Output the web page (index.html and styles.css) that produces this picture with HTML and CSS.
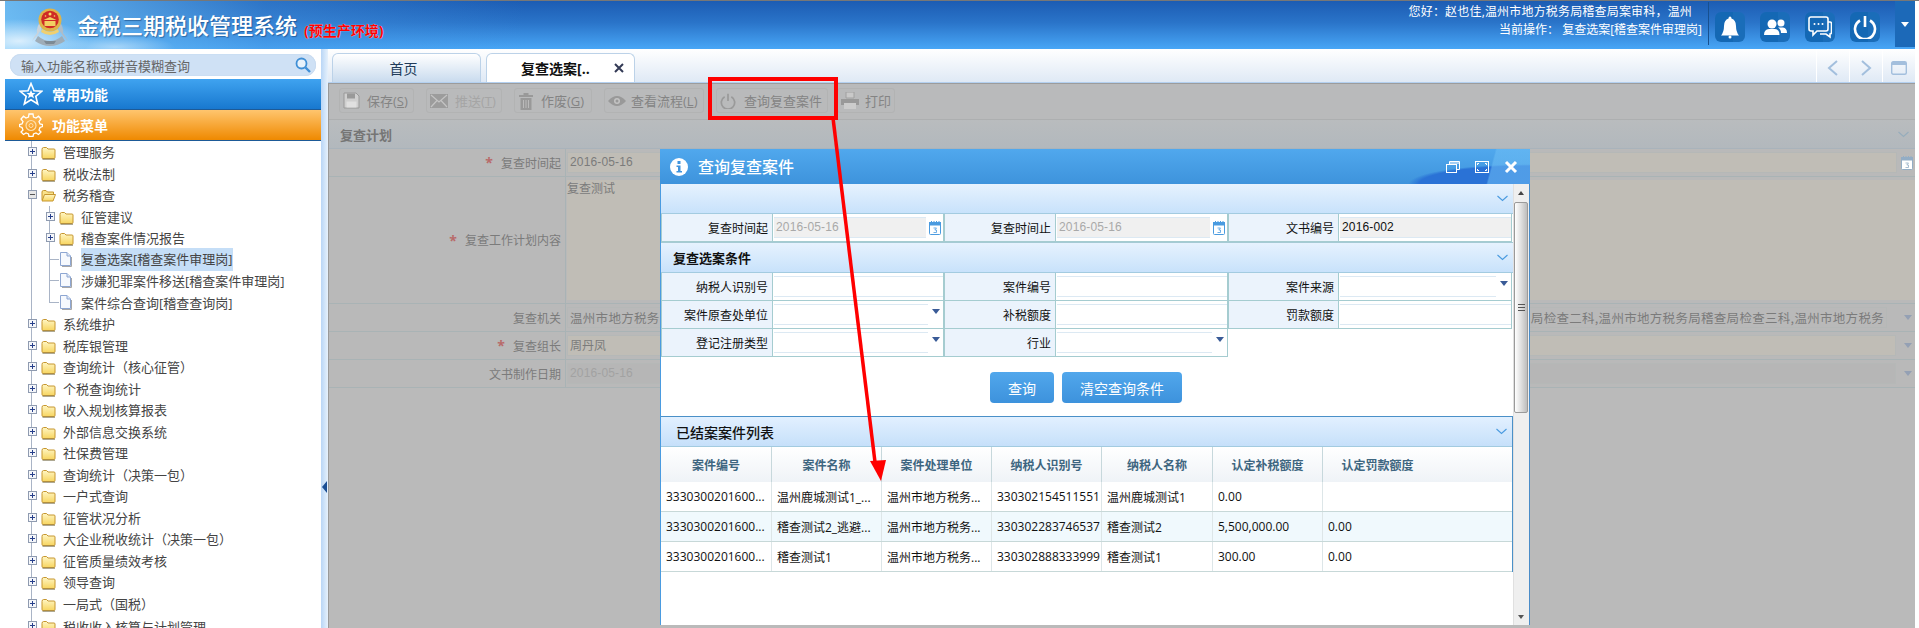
FILE: index.html
```html
<!DOCTYPE html>
<html lang="zh">
<head>
<meta charset="utf-8">
<title>金税三期税收管理系统</title>
<link rel="stylesheet" href="styles.css">
</head>
<body>
<svg class="defs" width="0" height="0" aria-hidden="true">
  <defs>
    <linearGradient id="fy" x1="0" y1="0" x2="0" y2="1"><stop offset="0" stop-color="#fff6c4"/><stop offset="1" stop-color="#f7d560"/></linearGradient>
    <symbol id="folder" viewBox="0 0 15 15"><path d="M1 4.500V12.500Q1 13.500 2 13.500H13Q14 13.500 14 12.500V5Q14 4 13 4H7L5.500 2.500H2.500Q1 2.500 1 4.500Z" fill="url(#fy)" stroke="#c6962f"/><path d="M1.500 14.200H14" stroke="#8a8262" stroke-width="1"/></symbol>
    <symbol id="folder-open" viewBox="0 0 15 15"><path d="M1 12V4Q1 2.500 2.500 2.500H5L6.500 4H12.500V6" fill="#f9e28a" stroke="#c6962f"/><path d="M1 13H12L14.500 6.500H3.500Z" fill="url(#fy)" stroke="#c6962f"/></symbol>
    <symbol id="file" viewBox="0 0 13 15"><path d="M1.500 .5H8L11.500 4V13.500H1.500Z" fill="#f6f9fe" stroke="#8da6d2"/><path d="M8 .5V4H11.500" fill="#dde7f6" stroke="#8da6d2"/><path d="M12.500 5V14.500H3" fill="none" stroke="#a7a7a7"/></symbol>
    <symbol id="plus" viewBox="0 0 9 9"><rect x=".5" y=".5" width="8" height="8" fill="#f4f6fa" stroke="#8f9bb0"/><path d="M2 4.500H7M4.500 2V7" stroke="#27408b"/></symbol>
    <symbol id="minus" viewBox="0 0 9 9"><rect x=".5" y=".5" width="8" height="8" fill="#e6e6e6" stroke="#8f9bb0"/><path d="M2 4.500H7" stroke="#555"/></symbol>
    <symbol id="cal" viewBox="0 0 12 14"><rect x=".5" y="1.500" width="11" height="12" rx="1" fill="#fff" stroke="currentColor"/><rect x="0" y="1" width="12" height="3.500" fill="currentColor"/><path d="M2.500 0V2M5 0V2M7.500 0V2M10 0V2" stroke="currentColor"/><path d="M4.500 7H7.500L5.800 9H7.500V11.500H4.500" fill="none" stroke="currentColor" stroke-width=".8"/></symbol>
    <symbol id="chev" viewBox="0 0 11 7"><path d="M.5 1L5.500 5.500L10.500 1" fill="none" stroke="currentColor" stroke-width="1.100"/></symbol>
    <symbol id="power" viewBox="0 0 24 24"><path d="M7 5.500A10 10 0 1 0 17 5.500" fill="none" stroke="currentColor" stroke-width="2.600"/><path d="M12 1V12" stroke="currentColor" stroke-width="2.600"/></symbol>
  </defs>
</svg>

<div class="app">
  <header class="topbar">
    <div class="brand">
      <svg class="emblem" viewBox="0 0 36 38">
        <path d="M0 33Q5 29 9 22L10 12Q4 18 5 25Q2 29 0 33Z" fill="#c9d3db"/>
        <path d="M36 33Q31 29 27 22L26 12Q32 18 31 25Q34 29 36 33Z" fill="#aebcc8"/>
        <path d="M3 33Q10 38 18 38Q26 38 33 33L30 28Q24 33 18 33Q12 33 6 28Z" fill="#9fadb8"/>
        <path d="M12 33H24L22 36H14Z" fill="#7d8a94"/>
        <circle cx="18" cy="12" r="11.500" fill="#dfb44a"/>
        <circle cx="18" cy="11.500" r="8.800" fill="#cf2a26"/>
        <path d="M10 21Q18 27 26 21L27 24Q18 30 9 24Z" fill="#f0d070"/>
        <path d="M12.500 13H23.500V18H12.500ZM11.500 12L18 9L24.500 12Z" fill="#f2cf63"/>
        <circle cx="18" cy="6" r="1.500" fill="#f8dd66"/>
        <circle cx="13.500" cy="8" r=".8" fill="#f8dd66"/><circle cx="22.500" cy="8" r=".8" fill="#f8dd66"/>
      </svg>
      <span class="brand-title">金税三期税收管理系统</span>
      <span class="brand-env">(预生产环境)</span>
    </div>
    <div class="user">
      <p>您好：赵也佳,温州市地方税务局稽查局案审科，温州</p>
      <p>当前操作： 复查选案[稽查案件审理岗]</p>
    </div>
    <div class="top-actions">
      <span class="top-btn"><svg viewBox="0 0 24 24" width="24" height="24"><path d="M12 1.500Q13.500 1.500 13.500 3.500Q18 5 18 11Q18 17 21 20.500H3Q6 17 6 11Q6 5 10.500 3.500Q10.500 1.500 12 1.500Z" fill="#fff"/><circle cx="12" cy="22" r="1.500" fill="#fff"/></svg></span>
      <span class="top-btn"><svg viewBox="0 0 24 24" width="24" height="24"><circle cx="9" cy="9" r="4.500" fill="#fff"/><circle cx="18" cy="8" r="3.500" fill="#fff"/><path d="M1 20Q1 14.500 6 14H12Q16.500 14.500 16.500 20Z" fill="#fff"/><path d="M15 12.500H20Q24 13 24 18H18Q18 14 15 12.500Z" fill="#fff"/></svg></span>
      <span class="top-btn"><svg viewBox="0 0 24 24" width="24" height="24"><path d="M3 2H18Q20 2 20 4V14Q20 16 18 16H9L5 20V16H3Q1 16 1 14V4Q1 2 3 2Z" fill="none" stroke="#fff" stroke-width="1.600"/><path d="M20 7H22Q23.500 7 23.500 9V17Q23.500 19 22 19V22L18 19H12" fill="none" stroke="#fff" stroke-width="1.600"/><circle cx="6.500" cy="9" r="1" fill="#fff"/><circle cx="10.500" cy="9" r="1" fill="#fff"/><circle cx="14.500" cy="9" r="1" fill="#fff"/></svg></span>
      <span class="top-btn"><svg class="ic-white" width="24" height="24"><use href="#power"/></svg></span>
    </div>
    <div class="top-more"><i class="caret-white"></i></div>
  </header>

  <div class="workspace">
    <aside class="sidebar">
      <div class="search">
        <div class="search-box">
          <span>输入功能名称或拼音模糊查询</span>
          <svg viewBox="0 0 16 16" width="16" height="16"><circle cx="6.500" cy="6.500" r="5" fill="#e8f2fb" stroke="#3f8fd6" stroke-width="1.800"/><path d="M10.500 10.500L15 15" stroke="#3f8fd6" stroke-width="2.400"/></svg>
        </div>
      </div>
      <div class="nav nav-blue">
        <svg viewBox="0 0 24 24" width="24" height="24"><path d="M12 1.500L15 8.800L22.800 9.300L16.800 14.300L18.700 22L12 17.800L5.300 22L7.200 14.300L1.200 9.300L9 8.800Z" fill="none" stroke="#fff" stroke-width="1.600"/><path d="M12 8L13.300 11H16.500L14 13L15 16.300L12 14.500L9 16.300L10 13L7.500 11H10.700Z" fill="#fff"/></svg>
        <span>常用功能</span>
      </div>
      <div class="nav nav-orange">
        <svg viewBox="0 0 24 24" width="24" height="24"><path d="M10 1H14L14.500 4L17 5L19.500 3.200L22 6L20 8.500L21 11L23.500 11.500V13.500L21 14.500L20 17L22 19L19.500 21.500L17 20L14.500 21L14 23.500H10L9.500 21L7 20L4.500 21.500L2 19L4 17L3 14.500L.5 13.500V11.500L3 11L4 8.500L2 6L4.500 3.200L7 5L9.500 4Z" fill="none" stroke="#fff" stroke-width="1.300"/><circle cx="12" cy="12.500" r="5" fill="none" stroke="#ffe0ad" stroke-width="1.200"/><circle cx="12" cy="12.500" r="2" fill="none" stroke="#ffe0ad"/></svg>
        <span>功能菜单</span>
      </div>
      <ul class="tree">
        <li class="node"><svg class="tg"><use href="#plus"/></svg><svg class="fd"><use href="#folder"/></svg><span>管理服务</span></li>
        <li class="node"><svg class="tg"><use href="#plus"/></svg><svg class="fd"><use href="#folder"/></svg><span>税收法制</span></li>
        <li class="node"><svg class="tg"><use href="#minus"/></svg><svg class="fd"><use href="#folder-open"/></svg><span>税务稽查</span></li>
        <li class="node sub"><svg class="tg"><use href="#plus"/></svg><svg class="fd"><use href="#folder"/></svg><span>征管建议</span></li>
        <li class="node sub"><svg class="tg"><use href="#plus"/></svg><svg class="fd"><use href="#folder"/></svg><span>稽查案件情况报告</span></li>
        <li class="node sub leaf"><i class="stub"></i><svg class="fl"><use href="#file"/></svg><span class="sel">复查选案[稽查案件审理岗]</span></li>
        <li class="node sub leaf"><i class="stub"></i><svg class="fl"><use href="#file"/></svg><span>涉嫌犯罪案件移送[稽查案件审理岗]</span></li>
        <li class="node sub leaf last"><i class="stub"></i><svg class="fl"><use href="#file"/></svg><span>案件综合查询[稽查查询岗]</span></li>
        <li class="node"><svg class="tg"><use href="#plus"/></svg><svg class="fd"><use href="#folder"/></svg><span>系统维护</span></li>
        <li class="node"><svg class="tg"><use href="#plus"/></svg><svg class="fd"><use href="#folder"/></svg><span>税库银管理</span></li>
        <li class="node"><svg class="tg"><use href="#plus"/></svg><svg class="fd"><use href="#folder"/></svg><span>查询统计（核心征管）</span></li>
        <li class="node"><svg class="tg"><use href="#plus"/></svg><svg class="fd"><use href="#folder"/></svg><span>个税查询统计</span></li>
        <li class="node"><svg class="tg"><use href="#plus"/></svg><svg class="fd"><use href="#folder"/></svg><span>收入规划核算报表</span></li>
        <li class="node"><svg class="tg"><use href="#plus"/></svg><svg class="fd"><use href="#folder"/></svg><span>外部信息交换系统</span></li>
        <li class="node"><svg class="tg"><use href="#plus"/></svg><svg class="fd"><use href="#folder"/></svg><span>社保费管理</span></li>
        <li class="node"><svg class="tg"><use href="#plus"/></svg><svg class="fd"><use href="#folder"/></svg><span>查询统计（决策一包）</span></li>
        <li class="node"><svg class="tg"><use href="#plus"/></svg><svg class="fd"><use href="#folder"/></svg><span>一户式查询</span></li>
        <li class="node"><svg class="tg"><use href="#plus"/></svg><svg class="fd"><use href="#folder"/></svg><span>征管状况分析</span></li>
        <li class="node"><svg class="tg"><use href="#plus"/></svg><svg class="fd"><use href="#folder"/></svg><span>大企业税收统计（决策一包）</span></li>
        <li class="node"><svg class="tg"><use href="#plus"/></svg><svg class="fd"><use href="#folder"/></svg><span>征管质量绩效考核</span></li>
        <li class="node"><svg class="tg"><use href="#plus"/></svg><svg class="fd"><use href="#folder"/></svg><span>领导查询</span></li>
        <li class="node"><svg class="tg"><use href="#plus"/></svg><svg class="fd"><use href="#folder"/></svg><span>一局式（国税）</span></li>
        <li class="node"><svg class="tg"><use href="#plus"/></svg><svg class="fd"><use href="#folder"/></svg><span>税收收入核算与计划管理</span></li>
      </ul>
    </aside>
    <div class="splitter"><i class="split-arrow"></i></div>

    <main class="main">
      <div class="tabbar">
        <div class="tab tab-home">首页</div>
        <div class="tab tab-active"><span>复查选案[..</span><svg class="tab-x" width="10" height="10" viewBox="0 0 10 10"><path d="M1 1L9 9M9 1L1 9" stroke="#333a55" stroke-width="2"/></svg></div>
        <div class="tab-tools">
          <span class="tool"><svg width="12" height="18" viewBox="0 0 12 18"><path d="M10 2L2 9L10 16" fill="none" stroke="#a3bfdd" stroke-width="2"/></svg></span>
          <span class="tool"><svg width="12" height="18" viewBox="0 0 12 18"><path d="M2 2L10 9L2 16" fill="none" stroke="#a3bfdd" stroke-width="2"/></svg></span>
          <span class="tool"><svg width="16" height="14" viewBox="0 0 16 14"><rect x=".7" y=".7" width="14.600" height="12.600" rx="1.500" fill="none" stroke="#a3bfdd" stroke-width="1.400"/><rect x="1" y="1" width="14" height="3" fill="#a3bfdd"/></svg></span>
        </div>
      </div>

      <div class="page">
        <div class="toolbar">
          <span class="tb tb-save"><svg width="17" height="17" viewBox="0 0 17 17"><path d="M1 1H13L16 4V16H1Z" fill="#cfcfcf" stroke="#999"/><rect x="4" y="1.500" width="8" height="5" fill="#999"/><rect x="3.500" y="9.500" width="10" height="6" fill="#e0e0e0"/></svg><span>保存(<u>S</u>)</span></span>
          <span class="tb tb-off"><svg width="18" height="14" viewBox="0 0 18 14"><rect x="0" y="0" width="18" height="14" fill="#9c9c9c"/><path d="M1 1L9 8L17 1M1 13L7 6.500M17 13L11 6.500" fill="none" stroke="#c4c4c4" stroke-width="1.200"/></svg><span>推送(<u>T</u>)</span></span>
          <span class="tb tb-del"><svg width="14" height="18" viewBox="0 0 14 18"><path d="M0 3H14V5H0ZM4.500 1H9.500V3H4.500ZM1.500 6H12.500V18H1.500Z" fill="#999"/><path d="M4.500 8V16M7 8V16M9.500 8V16" stroke="#bbb"/></svg><span>作废(<u>G</u>)</span></span>
          <span class="tb tb-flow"><svg width="18" height="12" viewBox="0 0 18 12"><path d="M0 6Q9 -4 18 6Q9 16 0 6Z" fill="#999"/><circle cx="9" cy="6" r="3" fill="#c4c4c4"/><circle cx="9" cy="6" r="1.500" fill="#999"/></svg><span>查看流程(<u>L</u>)</span></span>
          <span class="tb tb-query"><svg class="ic-grey" width="16" height="16"><use href="#power"/></svg><span>查询复查案件</span></span>
          <span class="tb tb-print"><svg width="18" height="17" viewBox="0 0 18 17"><path d="M5 0H13V6H5Z" fill="#c9c9c9" stroke="#a0a0a0"/><path d="M0 7H18V13H0Z" fill="#999"/><path d="M3 11H15V17H3Z" fill="#ccc"/></svg><span>打印</span></span>
        </div>

        <div class="bg-head"><span>复查计划</span><svg class="bg-chev"><use href="#chev"/></svg></div>
        <div class="bg-form">
          <div class="bg-row">
            <label class="bg-label"><em>*</em>复查时间起</label>
            <div class="bg-value"><span class="bg-input beige arial">2016-05-16</span><svg class="bg-cal"><use href="#cal"/></svg></div>
          </div>
          <div class="bg-row bg-tall">
            <label class="bg-label"><em>*</em>复查工作计划内容</label>
            <div class="bg-value"><span class="bg-area">复查测试</span></div>
          </div>
          <div class="bg-row">
            <label class="bg-label">复查机关</label>
            <div class="bg-value"><span class="bg-input plain"><span>温州市地方税务</span><span>局检查二科,温州市地方税务局稽查局检查三科,温州市地方税务</span></span><i class="bg-caret"></i></div>
          </div>
          <div class="bg-row">
            <label class="bg-label"><em>*</em>复查组长</label>
            <div class="bg-value"><span class="bg-input beige">周丹凤</span><i class="bg-caret"></i></div>
          </div>
          <div class="bg-row">
            <label class="bg-label">文书制作日期</label>
            <div class="bg-value"><span class="bg-input dim arial">2016-05-16</span><i class="bg-caret"></i></div>
          </div>
        </div>
      </div>

      <section class="modal">
        <div class="modal-title">
          <svg width="18" height="18" viewBox="0 0 18 18"><circle cx="9" cy="9" r="9" fill="#fff"/><rect x="7.500" y="3" width="3" height="3" fill="#3f94de"/><path d="M6.500 7.500H10.500V13H12V14.500H6.500V13H8V9H6.500Z" fill="#3f94de"/></svg>
          <h1>查询复查案件</h1>
          <div class="modal-tools">
            <svg width="14" height="12" viewBox="0 0 14 12"><rect x=".5" y="3.500" width="10" height="8" fill="none" stroke="#fff"/><path d="M3.500 3.500V.5H13.500V8.500H10.500M3.500 2H13.500" fill="none" stroke="#fff"/></svg>
            <svg width="14" height="12" viewBox="0 0 14 12"><rect x=".5" y=".5" width="13" height="11" fill="none" stroke="#fff"/><path d="M2.500 4V2.500H4M10 2.500H11.500V4M2.500 8V9.500H4M10 9.500H11.500V8" fill="none" stroke="#fff"/></svg>
            <svg width="14" height="14" viewBox="0 0 14 14"><path d="M2 2L12 12M12 2L2 12" stroke="#fff" stroke-width="3"/></svg>
          </div>
        </div>
        <div class="modal-body">
          <div class="modal-content">
            <div class="m-head"><span></span><svg class="m-chev"><use href="#chev"/></svg></div>
            <div class="m-form">
              <label>复查时间起</label>
              <div class="cell"><span class="field ro grey arial">2016-05-16</span><svg class="m-cal"><use href="#cal"/></svg></div>
              <label>复查时间止</label>
              <div class="cell"><span class="field ro grey arial">2016-05-16</span><svg class="m-cal"><use href="#cal"/></svg></div>
              <label>文书编号</label>
              <div class="cell"><span class="field ro arial">2016-002</span></div>
            </div>
            <div class="m-head m-head-2"><span>复查选案条件</span><svg class="m-chev"><use href="#chev"/></svg></div>
            <div class="m-form">
              <label>纳税人识别号</label>
              <div class="cell"><span class="field"></span></div>
              <label>案件编号</label>
              <div class="cell"><span class="field"></span></div>
              <label>案件来源</label>
              <div class="cell"><span class="field"></span><i class="m-caret"></i></div>
              <label>案件原查处单位</label>
              <div class="cell"><span class="field"></span><i class="m-caret"></i></div>
              <label>补税额度</label>
              <div class="cell"><span class="field"></span></div>
              <label>罚款额度</label>
              <div class="cell"><span class="field"></span></div>
              <label>登记注册类型</label>
              <div class="cell"><span class="field"></span><i class="m-caret"></i></div>
              <label>行业</label>
              <div class="cell"><span class="field"></span><i class="m-caret"></i></div>
            </div>
            <div class="m-actions">
              <button class="btn btn-a">查询</button>
              <button class="btn btn-b">清空查询条件</button>
            </div>
            <div class="list-panel">
              <div class="m-head list-head"><span>已结案案件列表</span><svg class="m-chev"><use href="#chev"/></svg></div>
              <div class="grid grid-head">
                <span>案件编号</span><span>案件名称</span><span>案件处理单位</span><span>纳税人识别号</span><span>纳税人名称</span><span>认定补税额度</span><span>认定罚款额度</span>
              </div>
              <div class="grid grid-row">
                <span>3330300201600...</span><span>温州鹿城测试1_...</span><span>温州市地方税务...</span><span>330302154511551</span><span>温州鹿城测试1</span><span>0.00</span><span></span>
              </div>
              <div class="grid grid-row alt">
                <span>3330300201600...</span><span>稽查测试2_逃避...</span><span>温州市地方税务...</span><span>330302283746537</span><span>稽查测试2</span><span>5,500,000.00</span><span>0.00</span>
              </div>
              <div class="grid grid-row">
                <span>3330300201600...</span><span>稽查测试1</span><span>温州市地方税务...</span><span>330302888333999</span><span>稽查测试1</span><span>300.00</span><span>0.00</span>
              </div>
            </div>
          </div>
          <div class="vscroll">
            <i class="sc-up"></i>
            <div class="sc-thumb"><i class="sc-grip"></i></div>
            <i class="sc-down"></i>
          </div>
        </div>
      </section>
    </main>
  </div>
</div>

<svg class="annotation" width="1919" height="628" viewBox="0 0 1919 628" aria-hidden="true">
  <rect x="710" y="79" width="126" height="39" fill="none" stroke="#f00" stroke-width="4"/>
  <path d="M833 118L875 462" stroke="#f00" stroke-width="3.500" fill="none"/>
  <path d="M870 461L886 460L881 481Z" fill="#f00"/>
</svg>
</body>
</html>
```

FILE: styles.css
```css
* { box-sizing: border-box; }
html, body { margin: 0; height: 100%; overflow: hidden; background: #fff; }
body {
  font-family: "Open Sans", "Noto Sans CJK SC", sans-serif;
  font-size: 12px;
  color: #222;
}
p, h1, ul { margin: 0; padding: 0; }
i, em { font-style: normal; }
.defs { position: absolute; }
.arial { font-family: "Liberation Sans", "Noto Sans CJK SC", sans-serif; letter-spacing: .15px; }

.app {
  width: 1919px;
  height: 628px;
  padding: 1px 4px 0 5px;
  display: flex;
  flex-direction: column;
  background: linear-gradient(#777 1px, #fff 1px);
  overflow: hidden;
}

/* ---------- header ---------- */
.topbar {
  flex: 0 0 48px;
  display: flex;
  align-items: stretch;
  color: #fff;
  background:
    radial-gradient(ellipse 70px 22px at 14px 40px, rgba(255,255,255,.75), rgba(255,255,255,0)),
    radial-gradient(ellipse 60px 12px at 110px 46px, rgba(255,255,255,.45), rgba(255,255,255,0)),
    linear-gradient(90deg, rgba(120,200,250,.85) 0, rgba(70,150,225,.4) 260px, rgba(40,110,200,0) 520px),
    linear-gradient(#1c5cb3 0, #2a74c9 45%, #48a6f6 100%);
}
.brand {
  flex: 1;
  display: flex;
  align-items: center;
  padding-left: 27px;
}
.emblem { width: 36px; height: 38px; margin-top: 4px; margin-right: 9px; flex: none; }
.brand-title {
  font-size: 22px;
  font-weight: 500;
  line-height: 30px;
  margin-top: -1px;
  text-shadow: 1px 1px 1px rgba(0,40,90,.45);
}
.brand-env {
  color: #f00;
  font-size: 14px;
  font-weight: 700;
  margin: 9px 0 0 7px;
  text-shadow: 0 0 1px #fff;
}
.user {
  display: flex;
  flex-direction: column;
  align-items: flex-end;
  padding: 2px 6px 0 0;
  font-size: 12px;
  line-height: 18px;
}
.user p:first-child { padding-right: 10px; letter-spacing: .18px; }
.top-actions {
  display: flex;
  gap: 15px;
  padding: 10px 15px 0 6px;
  border-left: 1px solid #17508f;
  margin: 1px 0 4px;
}
.top-btn {
  width: 30px;
  height: 30px;
  border-radius: 6px;
  background: linear-gradient(90deg, #1468b4 60%, #1a6db9 60%);
  display: flex;
  align-items: center;
  justify-content: center;
}
.ic-white { color: #fff; }
.top-more {
  width: 20px;
  margin-bottom: 2px;
  background: #1c69b8;
  display: flex;
  align-items: center;
  justify-content: center;
}
.caret-white {
  width: 0; height: 0;
  border: 4px solid transparent;
  border-top: 5px solid #fff;
  margin-top: 4px;
}

/* ---------- workspace ---------- */
.workspace { flex: 1; display: flex; min-height: 0; }
.sidebar { width: 316px; flex: none; display: flex; flex-direction: column; overflow: hidden; background: #fff; }
.search { height: 30px; padding: 5px 5px 0; flex: none; }
.search-box {
  height: 22px;
  border-radius: 11px;
  background: #cfe1f5;
  box-shadow: inset 0 0 1px #9fbcdc;
  display: flex;
  align-items: center;
  justify-content: space-between;
  padding: 0 5px 0 11px;
  color: #666;
  font-size: 13px;
}
.nav {
  flex: none;
  height: 31px;
  display: flex;
  align-items: center;
  color: #fff;
  font-weight: 700;
  padding-left: 14px;
  gap: 9px;
  border-bottom: 1px solid #1d5a97;
}
.nav span { font-size: 14px; line-height: 20px; margin-top: 1px; }
.nav-blue { background: linear-gradient(#3fa3f0, #1878cf); }
.nav-orange { background: linear-gradient(#ffc56e, #ef8900); }

.tree { list-style: none; flex: 1; }
.node {
  height: 21.5px;
  display: flex;
  align-items: center;
  padding-left: 23px;
  font-size: 13px;
  color: #444;
  white-space: nowrap;
  background: linear-gradient(#a9b4c6, #a9b4c6) 26px 0 / 1px 100% no-repeat;
}
.tree > .node:last-child { height: 23px; align-items: flex-start; padding-top: 3px; }
.tg { width: 9px; height: 9px; flex: none; }
.tree > .node:last-child .tg { margin-top: 4px; }
.fd { width: 15px; height: 15px; flex: none; margin: 2px 7px 0 4px; }
.sub {
  padding-left: 41px;
  background:
    linear-gradient(#a9b4c6, #a9b4c6) 26px 0 / 1px 100% no-repeat,
    linear-gradient(#a9b4c6, #a9b4c6) 44px 0 / 1px 100% no-repeat;
}
.last {
  background:
    linear-gradient(#a9b4c6, #a9b4c6) 26px 0 / 1px 100% no-repeat,
    linear-gradient(#a9b4c6, #a9b4c6) 44px 0 / 1px 50% no-repeat;
}
.stub { width: 10px; height: 1px; margin-left: 3px; background: #a9b4c6; flex: none; }
.fl { width: 13px; height: 15px; flex: none; margin: 0 9px 0 0; }
.sel { background: #c5def7; height: 23px; line-height: 22px; }

.splitter {
  width: 7px;
  flex: none;
  background: linear-gradient(90deg, #b9d6f6, #e6f1fc);
  display: flex;
  align-items: flex-start;
  padding-top: 432px;
  justify-content: center;
}
.split-arrow {
  width: 0; height: 0;
  border-top: 6px solid transparent;
  border-bottom: 6px solid transparent;
  border-right: 5px solid #1c4f94;
}

/* ---------- main ---------- */
.main { flex: 1; min-width: 0; position: relative; display: flex; flex-direction: column; }
.tabbar {
  flex: none;
  height: 34px;
  display: flex;
  align-items: flex-end;
  padding-left: 4px;
  gap: 5px;
  background: linear-gradient(#fff, #dfe9f5);
  border-bottom: 1px solid #b3d0f0;
}
.tab {
  width: 149px;
  height: 29px;
  border: 1px solid #bcd2e8;
  border-bottom: 0;
  border-radius: 6px 6px 0 0;
  background: linear-gradient(#fff, #c9dbee);
  font-size: 14px;
  color: #223c5a;
  display: flex;
  align-items: center;
  justify-content: center;
}
.tab-home { padding-right: 6px; }
.tab-active {
  background: #fff;
  color: #111;
  font-weight: 700;
  justify-content: flex-start;
  padding-left: 34px;
}
.tab-x { margin-left: 24px; flex: none; }
.tab-tools { margin-left: auto; display: flex; align-self: stretch; }
.tool {
  width: 33px;
  border-left: 1px solid #fff;
  display: flex;
  align-items: center;
  justify-content: center;
  padding-top: 4px;
}

.page {
  flex: 1;
  min-height: 0;
  background: #bababa;
  border-top: 1px solid #9c9c9c;
  border-left: 1px solid #999;
  color: #7b7b7b;
  overflow: hidden;
}
.toolbar {
  height: 36px;
  display: flex;
  gap: 12px;
  padding: 4px 0 0 10px;
  background: #b9babb;
  border-bottom: 1px solid #adafb0;
}
.tb {
  height: 25px;
  display: flex;
  align-items: center;
  justify-content: flex-start;
  gap: 7px;
  padding: 0 0 0 3px;
  border: 1px solid #b2b3b3;
  border-radius: 3px;
  color: #848484;
  font-size: 13px;
  white-space: nowrap;
}
.tb svg { flex: none; }
.tb-save { width: 75px; }
.tb-off { width: 76px; }
.tb-del { width: 78px; gap: 8px; padding-left: 4px; }
.tb-flow { width: 100px; gap: 5px; }
.tb-query { width: 112px; gap: 8px; }
.tb-print { width: 58px; gap: 6px; margin-left: -3px; }
.tb u { text-decoration: underline; }
.tb-off { color: #a5a5a5; }
.ic-grey { color: #9a9a9a; }
.bg-head {
  height: 29px;
  display: flex;
  align-items: center;
  justify-content: space-between;
  padding: 0 6px 0 11px;
  background: linear-gradient(#b9bcbe, #b2b8bd);
  border-bottom: 1px solid #a9b3bb;
  font-size: 13px;
  font-weight: 700;
  color: #757575;
}
.bg-chev { width: 11px; height: 7px; color: #97adbc; }
.bg-row {
  display: grid;
  grid-template-columns: 237px 1fr;
  height: 28px;
  border-bottom: 1px solid #a9b3b5;
}
.bg-tall { height: 127px; }
.bg-label {
  display: flex;
  align-items: center;
  justify-content: flex-end;
  padding-right: 4px;
  border-right: 1px solid #a9b3b5;
  white-space: nowrap;
  background: #b9b9b9;
}
.bg-label em { color: #b86a6a; font-size: 14px; margin-right: 8px; font-weight: 700; }
.bg-value {
  display: flex;
  align-items: center;
  gap: 2px;
  padding: 3px 0 3px 1px;
  min-width: 0;
  background: #b9b9b9;
}
.bg-input {
  flex: 1;
  min-width: 0;
  height: 21px;
  line-height: 19px;
  padding: 0 2px;
  border: 1px solid #b5b8b7;
  overflow: hidden;
  white-space: nowrap;
}
.beige { background: #c0bdb6; }
.plain {
  display: flex;
  justify-content: space-between;
  font-family: "Noto Sans CJK SC", sans-serif;
  font-size: 12.500px;
  letter-spacing: .3px;
  margin-right: 9px;
}
.dim { background: #b6b6b6; color: #a2a2a2; }
.bg-area {
  flex: 1;
  height: 100%;
  margin-top: -1px;
  background: #c0bdb6;
  line-height: 17px;
}
.bg-cal { width: 12px; height: 14px; margin: 0 2px; color: #93adc5; flex: none; }
.bg-caret {
  width: 0; height: 0;
  flex: none;
  margin: 0 3px 0 6px;
  border: 4px solid transparent;
  border-top: 5px solid #94a0b4;
  border-bottom: 0;
}

/* ---------- modal ---------- */
.modal {
  position: absolute;
  left: 332px;
  top: 100px;
  width: 870px;
  height: 476px;
  display: flex;
  flex-direction: column;
  background: #fff;
  color: #111;
}
.modal-title {
  flex: none;
  height: 35px;
  display: flex;
  align-items: center;
  padding-left: 10px;
  color: #fff;
  background:
    linear-gradient(105deg, rgba(110,190,245,0) 95%, rgba(110,190,245,.55) 95.2%),
    radial-gradient(ellipse 135px 22px at 100% 100%, #2a72d6 82%, rgba(42,114,214,0) 90%),
    linear-gradient(#50a8ed, #3e93dc);
}
.modal-title h1 { font-size: 16px; font-weight: 500; margin-left: 10px; flex: 1; line-height: 20px; }
.modal-tools { display: flex; align-items: center; gap: 15px; padding-right: 12px; }
.modal-body {
  flex: 1;
  min-height: 0;
  display: flex;
  border-left: 1px solid #4a9be0;
  border-right: 1px solid #4a8cc8;
}
.modal-content { flex: 1; min-width: 0; overflow: hidden; }
.m-head {
  height: 30px;
  display: flex;
  align-items: center;
  justify-content: space-between;
  padding: 0 5px 0 12px;
  background: linear-gradient(#e6f2fe, #c8e2fb);
  font-size: 13px;
  font-weight: 700;
  border-bottom: 1px solid #a3cbe0;
}
.m-head-2 { border-top: 1px solid #a5cad4; height: 31px; }
.m-chev { width: 11px; height: 7px; color: #4a9be0; }
.m-form {
  display: grid;
  grid-template-columns: 112px 171px 112px 172px 111px 173px;
  grid-auto-rows: 28px;
  width: 851px;
}
.m-form label {
  display: flex;
  align-items: center;
  justify-content: flex-end;
  padding-right: 4px;
  background: #ebf3fc;
  border: 1px solid #a5ccd0;
  border-width: 0 1px 1px 1px;
  white-space: nowrap;
}
.cell {
  display: flex;
  align-items: center;
  padding: 3px 0 3px 1px;
  border: 1px solid #a5ccd0;
  border-width: 0 1px 1px 0;
  min-width: 0;
}
.field {
  flex: 1;
  min-width: 0;
  height: 21px;
  line-height: 19px;
  padding: 0 2px;
  border-top: 1px solid #dce9f3;
  border-bottom: 1px solid #dce9f3;
  background: #fff;
  white-space: nowrap;
}
.field.ro { background: #f0f0f0; }
.field.grey { color: #a9a9a9; }
.m-cal { width: 12px; height: 14px; margin: 0 2px 0 3px; color: #4a9be0; flex: none; }
.m-caret {
  width: 0; height: 0;
  flex: none;
  margin: -6px 3px 0 4px;
  border: 4px solid transparent;
  border-top: 5px solid #3a5b97;
  border-bottom: 0;
}
.m-actions {
  height: 59px;
  display: flex;
  gap: 8px;
  padding: 15px 0 0 329px;
}
.btn {
  height: 31px;
  border: 0;
  border-radius: 4px;
  background: linear-gradient(#51a7ec, #3d92dc);
  color: #fff;
  font-family: "Noto Sans CJK SC", sans-serif;
  font-size: 14px;
  padding: 0;
}
.btn-a { width: 64px; }
.btn-b { width: 120px; }
.list-panel {
  border-top: 1px solid #4a90c8;
  border-right: 1px solid #4a90c8;
}
.list-head {
  height: 30px;
  font-size: 14px;
  padding-left: 15px;
  padding-right: 5px;
  font-weight: 500;
  background: linear-gradient(#e2f0ff, #c6e0fa);
}
.grid {
  display: grid;
  grid-template-columns: 111px 110px 110px 110px 111px 110px 1fr;
  white-space: nowrap;
}
.grid-head {
  height: 35px;
  color: #3e6680;
  font-weight: 700;
  background: linear-gradient(#fff, #eff3f7);
}
.grid-head span {
  display: flex;
  align-items: center;
  justify-content: center;
  border-right: 1px solid #c7d8dc;
}
.grid-head span:last-child { border-right: 0; padding-right: 80px; }
.grid-row { height: 30px; border-bottom: 1px solid #c7d8d8; }
.grid-row span {
  display: flex;
  align-items: center;
  padding-left: 5px;
  border-right: 1px solid #dde6e8;
  overflow: hidden;
}
.grid-row span:last-child { border-right: 0; }
.alt { background: #f0f9fd; }

.vscroll {
  width: 16px;
  flex: none;
  background: #efefef;
  border-left: 1px solid #e0e0e0;
  position: relative;
}
.sc-up, .sc-down {
  position: absolute;
  left: 4px;
  width: 0; height: 0;
  border: 3.500px solid transparent;
}
.sc-up { top: 7px; border-bottom: 4px solid #444; border-top: 0; }
.sc-down { bottom: 6px; border-top: 4px solid #555; border-bottom: 0; }
.sc-thumb {
  position: absolute;
  left: 0;
  right: 1px;
  top: 18px;
  height: 211px;
  border: 1px solid #9a9a9a;
  border-radius: 2px;
  background: linear-gradient(90deg, #fff, #e6e6e6 40%, #bdbdbd);
  display: flex;
  align-items: center;
  justify-content: center;
}
.sc-grip {
  width: 7px;
  height: 7px;
  background: repeating-linear-gradient(#555 0, #555 1px, transparent 1px, transparent 3px);
}

.annotation { position: absolute; left: 0; top: 0; pointer-events: none; }
```
